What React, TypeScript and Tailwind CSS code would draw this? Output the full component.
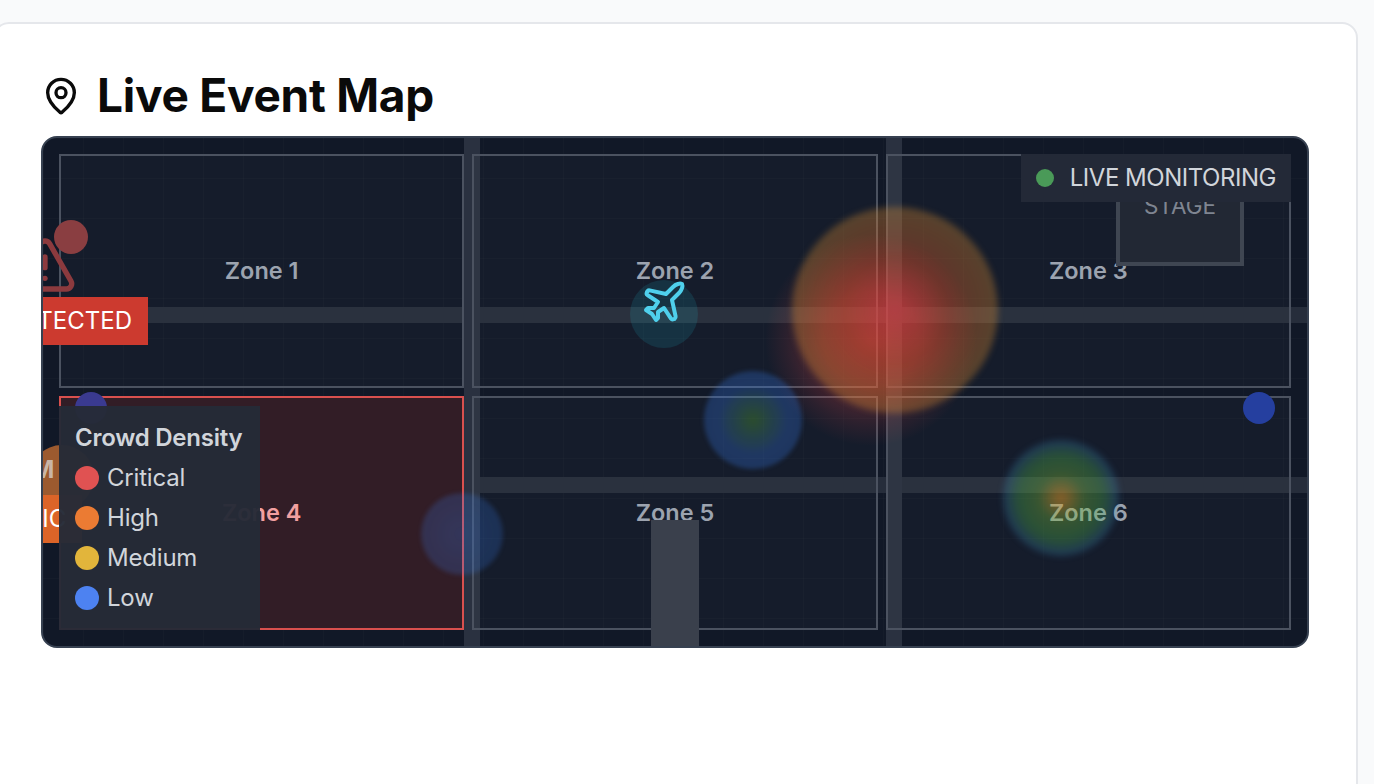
import { MapPin, Plane, TriangleAlert } from 'lucide-react';

const zones = ['Zone 1', 'Zone 2', 'Zone 3', 'Zone 4', 'Zone 5', 'Zone 6'];

const legend = [
  { label: 'Critical', color: 'bg-[#e05252]' },
  { label: 'High', color: 'bg-[#eb7b33]' },
  { label: 'Medium', color: 'bg-[#e2b53b]' },
  { label: 'Low', color: 'bg-[#4d82f1]' },
];

function Zones() {
  return (
    <div className="absolute inset-4 grid grid-cols-3 grid-rows-2 gap-2">
      {zones.map((zone) =>
        zone === 'Zone 4' ? (
          <div
            key={zone}
            className="flex items-center justify-center border-2 border-[#d9504e] bg-[#321d26] text-[23.5px] font-semibold text-[#f2a0a0]"
          >
            {zone}
          </div>
        ) : (
          <div
            key={zone}
            className="flex items-center justify-center border-2 border-[#4b5260] bg-white/[.02] text-[23.5px] font-semibold text-[#9ca3af]"
          >
            {zone}
          </div>
        ),
      )}
    </div>
  );
}

function Legend() {
  return (
    <div className="absolute bottom-4 left-4 w-[201px] bg-[#252a37]/[.97] pt-4 pr-4 pb-3 pl-4 text-[#d1d5db]">
      <div className="mb-1 text-[24px] leading-[32px] font-semibold tracking-[-0.25px] whitespace-nowrap">Crowd Density</div>
      <div className="flex flex-col">
        {legend.map((item) => (
          <div key={item.label} className="flex h-10 items-center gap-2 text-[24px] tracking-[-0.2px]">
            <span className={`size-6 rounded-full ${item.color}`} />
            {item.label}
          </div>
        ))}
      </div>
    </div>
  );
}

export default function App() {
  return (
    <div className="h-screen overflow-hidden bg-[#f9fafb] pt-[22px] font-['Inter',sans-serif]">
      <div className="ml-[-7px] h-[800px] w-[1365px] rounded-[16px] border-2 border-[#e5e7eb] bg-white pt-[48px] pr-[47px] pl-[46px]">
        <div className="mb-[16px] flex h-[48px] items-center gap-3 text-[#0a0a0a]">
          <MapPin size={40} strokeWidth={2} className="shrink-0" />
          <h2 className="mt-[-2px] ml-[4px] text-[46px] leading-[48px] font-bold tracking-[-0.25px]">Live Event Map</h2>
        </div>

        <div className="relative h-[512px] w-[1268px] overflow-hidden rounded-[16px] border-2 border-[#374151] bg-[#111827]">
          <div className="absolute inset-0 bg-[linear-gradient(rgba(255,255,255,.015)_1px,transparent_1px),linear-gradient(90deg,rgba(255,255,255,.015)_1px,transparent_1px)] bg-[size:40px_40px]" />

          {/* roads */}
          <div className="absolute inset-x-0 top-[169px] h-4 bg-[#262d3b]" />
          <div className="absolute inset-x-0 top-[339px] h-4 bg-[#262d3b]" />
          <div className="absolute inset-y-0 left-[421px] w-4 bg-[#2a3140]" />
          <div className="absolute inset-y-0 left-[843px] w-4 bg-[#2a3140]" />

          <Zones />

          <div className="absolute bottom-0 left-[608px] h-[126px] w-12 bg-[#3a404c]" />

          <div className="absolute top-[22px] left-[1073px] flex h-[106px] w-32 justify-center border-4 border-t-0 border-[#3f4652] bg-[#222834] pt-[30px] text-[22.5px] leading-[32px] text-[#7f8591]">
            STAGE
          </div>

          {/* heat blobs */}
          <div className="absolute top-[96px] left-[722px] size-[212px] rounded-full bg-[radial-gradient(circle_closest-side,rgba(239,68,68,.45)_0%,rgba(239,68,68,.32)_45%,rgba(239,68,68,.1)_80%,transparent_100%)]" />
          <div className="absolute top-[69px] left-[749px] size-[206px] rounded-full bg-[radial-gradient(circle_closest-side,rgba(239,68,68,.5)_0%,rgba(236,90,40,.36)_50%,rgba(225,150,50,.32)_100%)] blur-[3px]" />
          <div className="absolute top-[233px] left-[661px] size-[98px] rounded-full bg-[radial-gradient(circle_closest-side,rgba(90,180,50,.32)_0%,rgba(59,130,246,.27)_70%,rgba(59,130,246,.26)_100%)] blur-[2px]" />
          <div className="absolute top-[302px] left-[960px] size-[116px] rounded-full bg-[radial-gradient(circle_closest-side,rgba(230,150,40,.55)_0%,rgba(110,180,60,.38)_40%,rgba(80,180,80,.34)_72%,rgba(59,140,220,.24)_100%)] blur-[3px]" />
          <div className="absolute top-[355px] left-[378px] size-[82px] rounded-full bg-[radial-gradient(circle_closest-side,rgba(59,130,246,.25)_0%,rgba(59,130,246,.2)_100%)] blur-[2px]" />

          {/* markers */}
          <div className="absolute top-[82px] left-[11px] size-[34px] rounded-full bg-[#8a3e41]" />
          <TriangleAlert size={64} strokeWidth={2} className="absolute top-[95px] left-[-30px] text-[#8c3a3e]" />
          <div className="absolute top-[159px] right-[1159px] bg-[#cc3a2f] py-2 pr-4 pl-4 text-[24px] leading-[32px] whitespace-nowrap text-white">
            DETECTED
          </div>

          <div className="absolute top-[254px] left-[32px] size-8 rounded-full bg-[#3a3a90]" />
          <div className="absolute top-[254px] left-[1200px] size-8 rounded-full bg-[#253f9f]" />

          <div className="absolute top-[307px] left-[-13px] size-16 rounded-full bg-[#9c5a2f]" />
          <div className="absolute top-[320px] left-[-11px] text-[24px] leading-[24px] font-bold text-[#c9b5a6]">M</div>
          <div className="absolute top-[357px] left-[-65px] bg-[#dc6428] px-4 py-2 text-[24px] leading-[32px] whitespace-nowrap text-white">
            PANIC
          </div>

          <div className="absolute top-[142px] left-[587px] flex size-[68px] items-start justify-center rounded-full bg-[#22d3ee]/[.12]">
            <Plane size={48} strokeWidth={2} className="mt-[-2px] text-[#4fd0ec]" />
          </div>

          <div className="absolute top-4 right-4 flex h-12 items-center gap-4 bg-[#232937] px-[15px] text-[24px] tracking-[-0.47px] text-[#d1d5db]">
            <span className="size-[18px] rounded-full bg-[#4a9a58]" />
            LIVE MONITORING
          </div>

          <Legend />
        </div>
      </div>
    </div>
  );
}
